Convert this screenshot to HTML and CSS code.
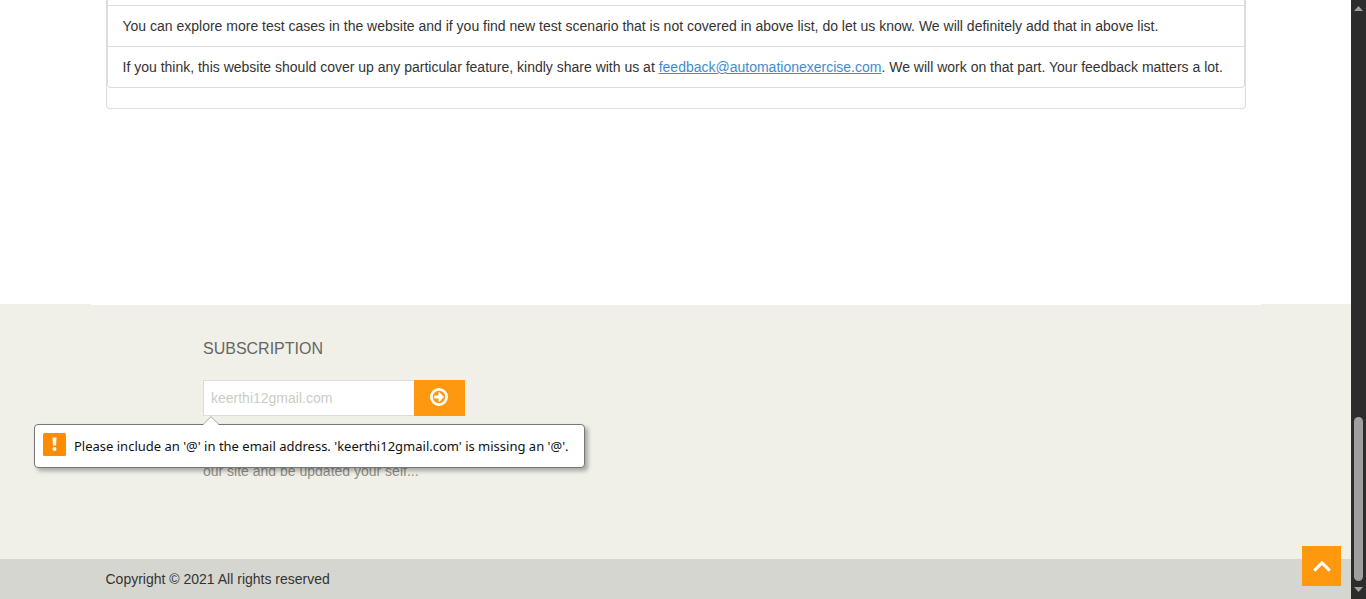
FILE: index.html
```
<!DOCTYPE html>
<html lang="en">
<head>
<meta charset="utf-8">
<title>Automation Exercise</title>
<link rel="stylesheet" href="styles.css">
</head>
<body>
<div class="page">
  <main class="content">
    <div class="container">
      <section class="panel">
        <ul class="feedback-list">
          <li>You can explore more test cases in the website and if you find new test scenario that is not covered in above list, do let us know. We will definitely add that in above list.</li>
          <li>If you think, this website should cover up any particular feature, kindly share with us at <a href="mailto:feedback@automationexercise.com">feedback@automationexercise.com</a>. We will work on that part. Your feedback matters a lot.</li>
        </ul>
      </section>
    </div>
  </main>
  <footer class="footer">
    <div class="footer-widget container">
      <div class="subscription">
        <h2 id="subscription-title">Subscription</h2>
        <form class="subscribe-form">
          <input class="email" type="email" value="keerthi12gmail.com" aria-labelledby="subscription-title">
          <button class="submit" type="button" aria-label="Subscribe">
            <svg width="18" height="18" viewBox="0 0 18 18" aria-hidden="true">
              <circle cx="9" cy="9" r="7.6" fill="none" stroke="#fff" stroke-width="2.8"/>
              <path d="M4.300 7.600h4.200V4.300h1L14 9l-4.500 4.700h-1v-3.300H4.300z" fill="#fff"/>
            </svg>
          </button>
          <div class="validation" role="alert">
            <svg class="pointer" width="18" height="9" viewBox="0 0 18 9" aria-hidden="true">
              <path d="M1 9L9 1l8 8z" fill="#fff"/>
              <path d="M1 8.500L9 .7l8 7.800" fill="none" stroke="#aaa"/>
            </svg>
            <svg class="warning" width="23" height="23" viewBox="0 0 23 23" aria-hidden="true">
              <rect width="23" height="23" rx="1.500" fill="#ff8c00"/>
              <path d="M9.500 4.500h4l-.4 8h-3.200z" fill="#fff"/>
              <circle cx="11.500" cy="16" r="2" fill="#fff"/>
            </svg>
            <span>Please include an '@' in the email address. 'keerthi12gmail.com' is missing an '@'.</span>
          </div>
        </form>
        <p class="note">our site and be updated your self...</p>
      </div>
    </div>
    <div class="footer-bottom">
      <div class="container"><p class="copyright">Copyright © 2021 All rights reserved</p></div>
    </div>
  </footer>
  <a class="scroll-up" href="#top" aria-label="Scroll to top">
    <svg width="18" height="11" viewBox="0 0 18 11" aria-hidden="true">
      <path d="M1.200 9.600L9 1.900l7.800 7.700" fill="none" stroke="#fff" stroke-width="3"/>
    </svg>
  </a>
</div>
<div class="scrollbar" aria-hidden="true">
  <svg width="9" height="5" viewBox="0 0 9 5"><path d="M0 5L4.500 0 9 5z" fill="#9f9f9f"/></svg>
  <div class="thumb"></div>
  <svg width="9" height="5" viewBox="0 0 9 5"><path d="M0 0h9L4.500 5z" fill="#9f9f9f"/></svg>
</div>
</body>
</html>
```

FILE: styles.css
```
* {
  box-sizing: border-box;
}

body {
  margin: 0;
  display: flex;
  height: 100vh;
  overflow: hidden;
  background: #fff;
  color: #333;
  font: 14px/20px "Liberation Sans", Arial, sans-serif;
}

h2, p, ul {
  margin: 0;
  padding: 0;
}

.page {
  position: relative;
  flex: 1;
  min-width: 0;
  display: flex;
  flex-direction: column;
}

.container {
  width: 100%;
  max-width: 1170px;
  margin: 0 auto;
  padding: 0 15px;
}

.content {
  flex: 1;
}

.panel {
  padding-bottom: 20px;
  border: 1px solid #ddd;
  border-top: 0;
  border-radius: 0 0 4px 4px;
}

.feedback-list {
  padding-top: 5px;
  list-style: none;
  border: 1px solid #ddd;
  border-top: 0;
  border-radius: 0 0 4px 4px;
}

.feedback-list li {
  padding: 10px 15px;
  border-top: 1px solid #ddd;
}

.feedback-list a {
  color: #428bca;
}

.footer {
  background: #f0f0e9;
}

.footer-widget {
  padding-bottom: 78px;
  border-top: 1px solid #fff;
}

/* One grid column of twelve, measured with the container's gutters */
.subscription {
  width: 293px;
  margin-left: calc((100% + 30px) / 12);
  padding-top: 34px;
}

.subscription h2 {
  margin-bottom: 21px;
  color: #666663;
  font-size: 16px;
  font-weight: 400;
  line-height: 20px;
  text-transform: uppercase;
}

.subscribe-form {
  position: relative;
  display: flex;
}

.email {
  width: 211px;
  height: 36px;
  padding: 0 7px;
  border: 1px solid #ddd;
  border-right: 0;
  border-radius: 0;
  outline: 0;
  background: #fff;
  color: #ccccc6;
  font: inherit;
}

.submit {
  display: flex;
  justify-content: center;
  width: 51px;
  height: 36px;
  padding: 8px 0;
  border: 0;
  background: #fe980f;
}

.validation {
  position: absolute;
  z-index: 2;
  top: 44px;
  left: -169px;
  display: flex;
  align-items: center;
  gap: 8px;
  min-width: 551px;
  height: 44px;
  padding: 0 8px;
  border: 1px solid #777;
  border-radius: 4px;
  background: #fff;
  box-shadow: 3px 3px 4px rgba(0, 0, 0, .3);
  color: #111;
  font: 13px/20px "Noto Sans", "Open Sans", sans-serif;
  white-space: nowrap;
}

.warning {
  margin-bottom: 4px;
}

.pointer {
  position: absolute;
  top: -9px;
  left: 167px;
}

.note {
  margin-top: 45px;
  color: #8f8f88;
}

.footer-bottom {
  padding: 10px 0;
  background: #d6d6d0;
}

.scroll-up {
  position: absolute;
  right: 10px;
  bottom: 13px;
  display: grid;
  place-items: center;
  width: 39px;
  height: 40px;
  background: #fe980f;
}

.scrollbar {
  display: flex;
  flex-direction: column;
  align-items: center;
  width: 15px;
  padding: 6px 0 7px;
  background: #2c2c2c;
}

.thumb {
  width: 9px;
  height: 164px;
  margin-top: auto;
  margin-bottom: 6px;
  border-radius: 5px;
  background: #9f9f9f;
}
```
